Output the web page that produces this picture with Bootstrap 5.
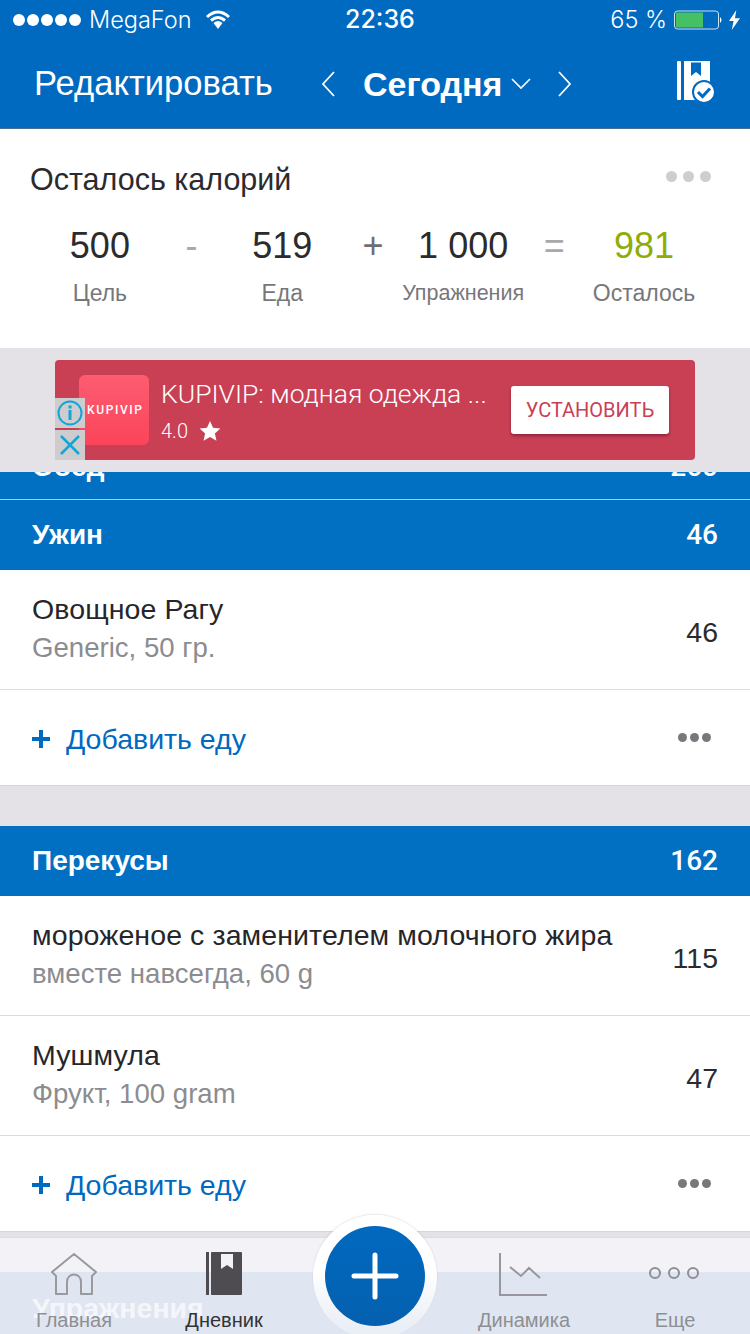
<!DOCTYPE html>
<html lang="ru">
<head>
<meta charset="UTF-8">
<meta name="viewport" content="width=device-width, initial-scale=1.0">
<title>Дневник</title>
<link href="https://cdn.jsdelivr.net/npm/bootstrap@5.3.3/dist/css/bootstrap.min.css" rel="stylesheet">
<style>
body { width: 750px; height: 1334px; overflow: hidden; position: relative; background: #e4e2e6; font-family: "Liberation Sans", sans-serif; color: #2b2b2d; }
.app-top { background: #0069c0; color: #fff; height: 129px; border-bottom: 1px solid #4a6f94; }
.status-row { height: 40px; padding: 0 10px 0 13px; font-family: Inter, sans-serif; font-size: 23.500px; font-weight: 300; }
.sig-dots { column-gap: 2px; }
.sig-dot { width: 12px; height: 12px; border-radius: 50%; background: #fff; }
.wifi-ico { margin-left: 13px; }
.status-time { left: 345px; top: 1px; font-weight: 500; font-size: 25px; }
.batt-ico { margin-left: 7px; }
.bolt-ico { margin-left: 5px; }
.title-row { height: 88px; padding: 0 35px 0 34px; }
.edit-link { font-size: 34.600px; width: 287px; }
.today-label { font-size: 34px; font-weight: 700; margin-left: 27px; }
.chev-down { margin-left: 9px; }
.chev-next { margin-left: 26px; }
.book-ico { margin-bottom: 4px; }
.summary-box { background: #fff; height: 219px; padding: 30px 39px 0 30px; }
.summary-title { font-size: 30.500px; line-height: 40px; }
.more-grey { column-gap: 6px; }
.more-grey i { width: 11px; height: 11px; border-radius: 50%; background: #cfcdd1; display: block; }
.sum-grid { margin-top: 25px; }
.sum-col { text-align: center; }
.sum-num { font-size: 36px; line-height: 44px; }
.sum-lbl { font-size: 23px; line-height: 30px; color: #77777b; margin-top: 10px; }
.sum-lbl-sm { font-size: 21.500px; }
.sum-op { font-size: 36px; line-height: 44px; color: #a9a8ac; text-align: center; }
.sum-op-dark { color: #6f6e72; }
.ad-wrap { height: 124px; padding: 12px 55px 12px; }
.ad-box { background: #c94055; border-radius: 4px; height: 100px; position: relative; padding: 15px 26px 0 24px; color: #fff; font-family: Roboto, sans-serif; }
.ad-logo { width: 70px; height: 70px; border-radius: 6px; background: linear-gradient(#fd5c72, #fb4459); font-size: 12px; font-weight: 500; letter-spacing: 1.600px; padding-left: 8px; }
.ad-name { font-size: 26.500px; font-weight: 300; line-height: 36px; margin-top: 1px; }
.ad-rate { font-size: 20px; font-weight: 300; line-height: 32px; margin-top: 3px; }
.ad-star { margin-left: 10px; }
.ad-btn { width: 158px; height: 48px; margin-top: 11px; background: #fff; color: #c94055; font-size: 20px; border-radius: 3px; border: 0; padding: 0; box-shadow: 0 2px 3px rgba(90,10,30,.5); font-family: Roboto, sans-serif; }
.ad-mark { position: absolute; left: 0; width: 30px; background: #cdcdcf; }
.meal-bar { background: #0170c2; color: #fff; height: 70px; padding: 0 32px; font-size: 28px; font-weight: 700; }
.meal-bar .meal-kcal { font-family: Roboto, sans-serif; font-weight: 500; }
.meal-cut { height: 28px; overflow: hidden; border-bottom: 1px solid #a9cdea; align-items: flex-start; }
.meal-cut span { margin-top: -26px; }
.food-row { background: #fff; height: 120px; padding: 0 32px; border-bottom: 1px solid #dcdbde; }
.food-name { font-size: 28.500px; line-height: 36px; color: #26262a; letter-spacing: .1px; margin-top: -2px; }
.food-sub { font-size: 27.600px; line-height: 36px; color: #8c8c90; margin-top: 3px; }
.food-num { font-size: 28.500px; color: #2b2b2d; padding-top: 6px; }
.add-row { background: #fff; height: 96px; padding: 0 39px 0 32px; border-bottom: 1px solid #d6d5d8; color: #0069c0; font-size: 28.500px; }
.add-label { padding-top: 4px; }
.add-plus { width: 18px; height: 18px; margin-right: 16px; margin-top: 2px; }
.more-dark { column-gap: 3px; }
.more-dark i { width: 9px; height: 9px; border-radius: 50%; background: #78787c; display: block; }
.meal-gap { height: 40px; }
.tab-bar { position: absolute; left: 0; right: 0; top: 1237px; height: 97px; background: #f3f2f6; border-top: 1px solid #dddcdf; }
.tab-tint { position: absolute; left: 0; right: 0; bottom: 0; height: 62px; background: #dfe6f1; }
.tab-ghost { position: absolute; left: 32px; top: 49px; color: #f5f6fa; font-size: 28.500px; font-weight: 700; }
.tab-item { position: absolute; top: 14px; text-align: center; font-size: 20px; color: #8f8f93; width: 110px; }
.tab-item svg { display: block; margin: 0 auto; }
.tab-item span { position: absolute; left: 0; right: 0; top: 55px; line-height: 26px; }
.add-circle { position: absolute; left: 313px; top: 1215px; width: 124px; height: 124px; padding-top: 11px; border-radius: 50%; background: linear-gradient(#fff 45%, rgba(255,255,255,.35) 90%); box-shadow: 0 -1px 2px rgba(0,0,0,.1); display: flex; align-items: flex-start; justify-content: center; }
.add-circle div { width: 100px; height: 100px; border-radius: 50%; background: linear-gradient(#0069c0, #0560ae); display: flex; align-items: center; justify-content: center; }
</style>
</head>
<body>
<div class="app-top">
    <div class="status-row d-flex align-items-center position-relative">
        <div class="d-flex sig-dots"><span class="sig-dot"></span><span class="sig-dot"></span><span class="sig-dot"></span><span class="sig-dot"></span><span class="sig-dot"></span></div>
        <span class="ms-2">MegaFon</span>
        <svg class="wifi-ico" width="26" height="20" viewBox="0 0 26 20"><path d="M2 7Q13-3 24 7M6 10.500Q13 4.500 20 10.500" fill="none" stroke="#fff" stroke-width="3"/><path d="M8.500 13Q13 9 17.500 13L13 19Z" fill="#fff"/></svg>
        <span class="position-absolute status-time">22:36</span>
        <span class="ms-auto">65 %</span>
        <svg class="batt-ico" width="50" height="20" viewBox="0 0 50 20"><rect x=".5" y="1" width="44" height="18" rx="3" fill="none" stroke="#cfe3f3"/><rect x="2" y="2.500" width="27" height="15" fill="#45c163"/><path d="M46 7q3 3 0 6z" fill="#fff"/></svg>
        <svg class="bolt-ico" width="11" height="20" viewBox="0 0 12 22" preserveAspectRatio="none"><path d="M8 0 0 12h5l-2 10 9-13H6.500z" fill="#fff"/></svg>
    </div>
    <div class="title-row d-flex align-items-center">
        <div class="edit-link">Редактировать</div>
        <svg width="15" height="26" viewBox="0 0 15 26"><path d="M13 1 2 13l11 12" fill="none" stroke="#fff" stroke-width="1.800"/></svg>
        <div class="today-label">Сегодня</div>
        <svg class="chev-down" width="20" height="12" viewBox="0 0 20 12"><path d="M1 1l9 9 9-9" fill="none" stroke="#fff" stroke-width="1.600"/></svg>
        <svg class="chev-next" width="15" height="26" viewBox="0 0 15 26"><path d="M2 1l11 12L2 25" fill="none" stroke="#fff" stroke-width="1.800"/></svg>
        <svg class="ms-auto book-ico" width="38" height="42" viewBox="0 0 38 42"><rect x="0" y="0" width="4" height="39" rx="1" fill="#fff"/><path d="M7 0h26v39H7z" fill="#fff"/><path d="M14 1.500h10v13.500l-5-4-5 4z" fill="#0069c0"/><circle cx="27" cy="31" r="11" fill="#fff" stroke="#0069c0" stroke-width="2"/><path d="M21 31l4.500 4.500L33 27.500" fill="none" stroke="#0069c0" stroke-width="3"/></svg>
    </div>
</div>

<div class="summary-box">
    <div class="d-flex justify-content-between align-items-start">
        <div class="summary-title">Осталось калорий</div>
        <div class="more-grey d-flex mt-2 pt-1"><i></i><i></i><i></i></div>
    </div>
    <div class="d-flex sum-grid">
        <div class="sum-col" style="width:141px"><div class="sum-num">500</div><div class="sum-lbl">Цель</div></div>
        <div class="sum-op" style="width:44px">-</div>
        <div class="sum-col" style="width:139px"><div class="sum-num">519</div><div class="sum-lbl">Еда</div></div>
        <div class="sum-op sum-op-dark" style="width:44px">+</div>
        <div class="sum-col" style="width:138px"><div class="sum-num">1 000</div><div class="sum-lbl sum-lbl-sm">Упражнения</div></div>
        <div class="sum-op" style="width:46px">=</div>
        <div class="sum-col" style="width:135px"><div class="sum-num" style="color:#8fad0a">981</div><div class="sum-lbl">Осталось</div></div>
    </div>
</div>

<div class="ad-wrap">
    <div class="ad-box d-flex">
        <div class="ad-logo d-flex align-items-center">KUPIVIP</div>
        <div class="ms-2 ps-1 flex-grow-1">
            <div class="ad-name">KUPIVIP: модная одежда ...</div>
            <div class="ad-rate d-flex align-items-center">4.0
                <svg class="ad-star" width="24" height="22" viewBox="0 0 24 24"><path d="M12 1l3.300 7.500 8 .8-6 5.400 1.800 8L12 18.500 4.900 22.700l1.800-8-6-5.400 8-.8z" fill="#fff"/></svg>
            </div>
        </div>
        <button class="ad-btn" type="button">УСТАНОВИТЬ</button>
        <div class="ad-mark" style="top:38px;height:30px"><svg width="30" height="30" viewBox="0 0 30 30" class="d-block"><circle cx="15" cy="15" r="11.500" fill="none" stroke="#13a4d8" stroke-width="2"/><path d="M15 12v10M15 7.500v3" stroke="#13a4d8" stroke-width="3"/></svg></div>
        <div class="ad-mark" style="top:70px;height:30px"><svg width="30" height="30" viewBox="0 0 30 30" class="d-block"><path d="M6 6l18 18M24 6 6 24" stroke="#13a4d8" stroke-width="2.500"/></svg></div>
    </div>
</div>

<div class="meal-bar meal-cut d-flex justify-content-between"><span>Обед</span><span class="meal-kcal">260</span></div>
<div class="meal-bar d-flex justify-content-between align-items-center"><b>Ужин</b><b class="meal-kcal">46</b></div>
<div class="food-row d-flex justify-content-between align-items-center">
    <div><div class="food-name">Овощное Рагу</div><div class="food-sub">Generic, 50 гр.</div></div>
    <div class="food-num">46</div>
</div>
<div class="add-row d-flex align-items-center">
    <svg class="add-plus" viewBox="0 0 18 18"><path d="M9 0v18M0 9h18" stroke="#0069c0" stroke-width="4"/></svg>
    <span class="add-label">Добавить еду</span>
    <div class="more-dark d-flex ms-auto"><i></i><i></i><i></i></div>
</div>
<div class="meal-gap"></div>
<div class="meal-bar d-flex justify-content-between align-items-center"><b>Перекусы</b><b class="meal-kcal">162</b></div>
<div class="food-row d-flex justify-content-between align-items-center">
    <div><div class="food-name">мороженое с заменителем молочного жира</div><div class="food-sub">вместе навсегда, 60 g</div></div>
    <div class="food-num">115</div>
</div>
<div class="food-row d-flex justify-content-between align-items-center">
    <div><div class="food-name">Мушмула</div><div class="food-sub">Фрукт, 100 gram</div></div>
    <div class="food-num">47</div>
</div>
<div class="add-row d-flex align-items-center">
    <svg class="add-plus" viewBox="0 0 18 18"><path d="M9 0v18M0 9h18" stroke="#0069c0" stroke-width="4"/></svg>
    <span class="add-label">Добавить еду</span>
    <div class="more-dark d-flex ms-auto"><i></i><i></i><i></i></div>
</div>

<div class="tab-bar">
    <div class="tab-tint"></div>
    <div class="tab-ghost">Упражнения</div>
    <div class="tab-item" style="left:19px">
        <svg width="46" height="44" viewBox="0 0 46 44"><path d="M5 42V24L1 20 23 2l22 18-4 4v18H30V30c0-10-14-10-14 0v12z" fill="none" stroke="#9a9a9e" stroke-width="2" stroke-linejoin="round"/></svg>
        <span>Главная</span>
    </div>
    <div class="tab-item" style="left:169px;color:#333336">
        <svg width="36" height="43" viewBox="0 0 36 43"><rect width="3" height="43" fill="#4e4c50"/><rect x="5" width="31" height="43" rx="1" fill="#4e4c50"/><path d="M15 2h12v15l-6-4-6 4z" fill="#f3f2f6"/></svg>
        <span>Дневник</span>
    </div>
    <div class="tab-item" style="left:469px">
        <svg width="50" height="44" viewBox="0 0 50 44"><path d="M1 1v42h47" fill="none" stroke="#9a969e" stroke-width="2"/><path d="M11 15l11 9 8-8 11 10" fill="none" stroke="#9a969e" stroke-width="2"/></svg>
        <span>Динамика</span>
    </div>
    <div class="tab-item" style="left:620px">
        <svg width="54" height="44" viewBox="0 0 54 44"><circle cx="7" cy="21" r="5" fill="none" stroke="#8f8f93" stroke-width="2"/><circle cx="26" cy="21" r="5" fill="none" stroke="#8f8f93" stroke-width="2"/><circle cx="45" cy="21" r="5" fill="none" stroke="#8f8f93" stroke-width="2"/></svg>
        <span>Еще</span>
    </div>
</div>
<div class="add-circle"><div><svg width="48" height="48" viewBox="0 0 48 48"><path d="M24 3v42M3 24h42" stroke="#fff" stroke-width="5" stroke-linecap="round"/></svg></div></div>
<script src="https://cdn.jsdelivr.net/npm/bootstrap@5.3.3/dist/js/bootstrap.bundle.min.js"></script>
</body>
</html>
